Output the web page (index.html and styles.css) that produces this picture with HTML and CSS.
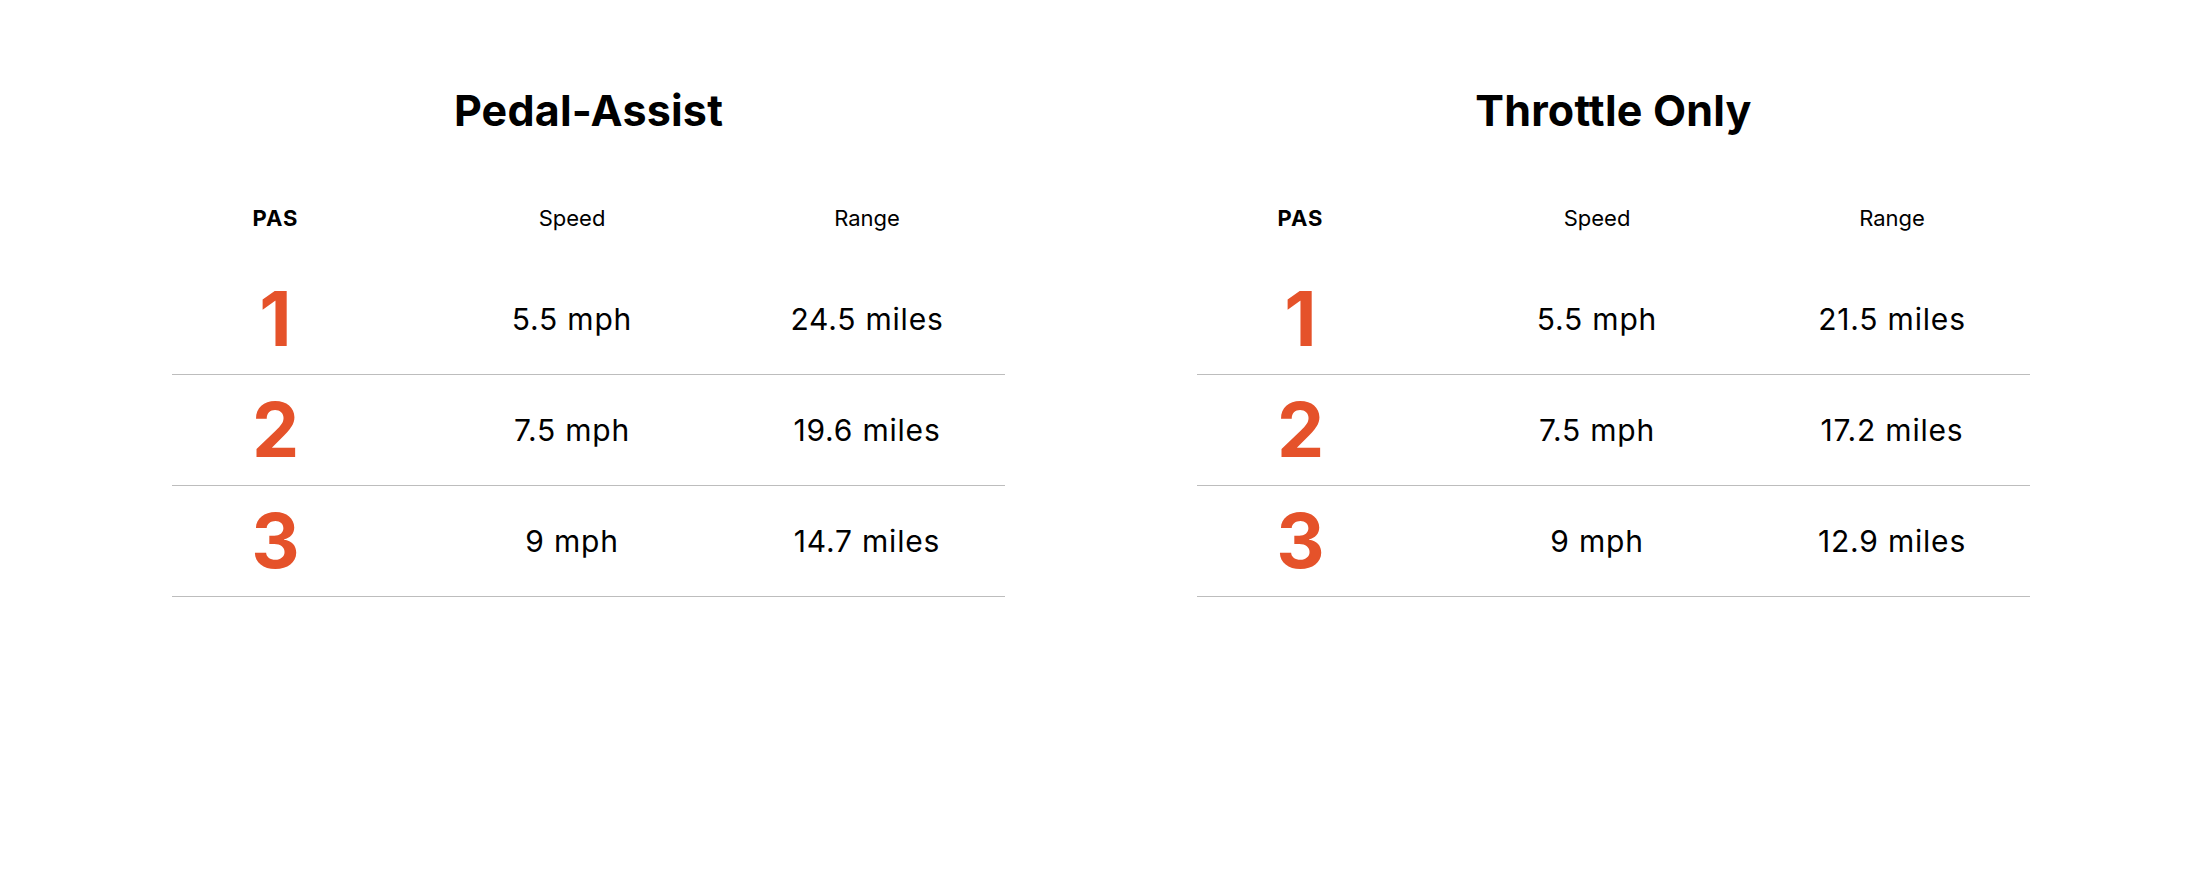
FILE: index.html
```html
<!DOCTYPE html>
<html lang="en">
<head>
<meta charset="utf-8">
<title>Pedal-Assist vs Throttle Only</title>
<link rel="stylesheet" href="styles.css">
</head>
<body>
<main class="page">
  <section class="spec">
    <h2 class="spec-title">Pedal-Assist</h2>
    <div class="spec-grid">
      <div class="cell head head-pas">PAS</div>
      <div class="cell head">Speed</div>
      <div class="cell head">Range</div>
      <div class="spacer head"></div>

      <div class="cell level">1</div>
      <div class="cell val">5.5 mph</div>
      <div class="cell val">24.5 miles</div>
      <div class="spacer row"></div>

      <div class="cell level">2</div>
      <div class="cell val">7.5 mph</div>
      <div class="cell val">19.6 miles</div>
      <div class="spacer row"></div>

      <div class="cell level">3</div>
      <div class="cell val">9 mph</div>
      <div class="cell val">14.7 miles</div>
      <div class="spacer row"></div>
    </div>
  </section>

  <section class="spec">
    <h2 class="spec-title">Throttle Only</h2>
    <div class="spec-grid">
      <div class="cell head head-pas">PAS</div>
      <div class="cell head">Speed</div>
      <div class="cell head">Range</div>
      <div class="spacer head"></div>

      <div class="cell level">1</div>
      <div class="cell val">5.5 mph</div>
      <div class="cell val">21.5 miles</div>
      <div class="spacer row"></div>

      <div class="cell level">2</div>
      <div class="cell val">7.5 mph</div>
      <div class="cell val">17.2 miles</div>
      <div class="spacer row"></div>

      <div class="cell level">3</div>
      <div class="cell val">9 mph</div>
      <div class="cell val">12.9 miles</div>
      <div class="spacer row"></div>
    </div>
  </section>
</main>
</body>
</html>
```
FILE: styles.css
```css
html, body {
  margin: 0;
  padding: 0;
  background: #ffffff;
}

body {
  font-family: Inter, "Noto Sans", "Liberation Sans", sans-serif;
  color: #000000;
}

.page {
  display: flex;
  gap: 192px;
  padding-left: 172px;
  padding-top: 85px;
}

.spec {
  width: 833px;
}

.spec-title {
  margin: 0 0 41px 0;
  height: 50px;
  line-height: 50px;
  font-size: 43px;
  font-weight: 700;
  text-align: center;
  letter-spacing: 0.2px;
}

.spec-grid {
  display: grid;
  grid-template-columns: 207px 386px 204px 1fr;
  grid-template-rows: 88px 111px 111px 111px;
}

.cell,
.spacer {
  display: flex;
  align-items: center;
  justify-content: center;
  text-align: center;
}

.cell.level,
.cell.val,
.spacer.row {
  border-bottom: 1px solid #bdbdbd;
}

.head {
  font-size: 22px;
  font-weight: 400;
  padding-bottom: 5px;
}

.head-pas {
  font-weight: 700;
  letter-spacing: 1px;
}

.level {
  font-size: 75px;
  font-weight: 700;
  color: #e5522a;
  line-height: 1;
  padding-bottom: 2px;
}

.val {
  font-size: 30px;
  font-weight: 400;
  letter-spacing: 0.8px;
}
```
